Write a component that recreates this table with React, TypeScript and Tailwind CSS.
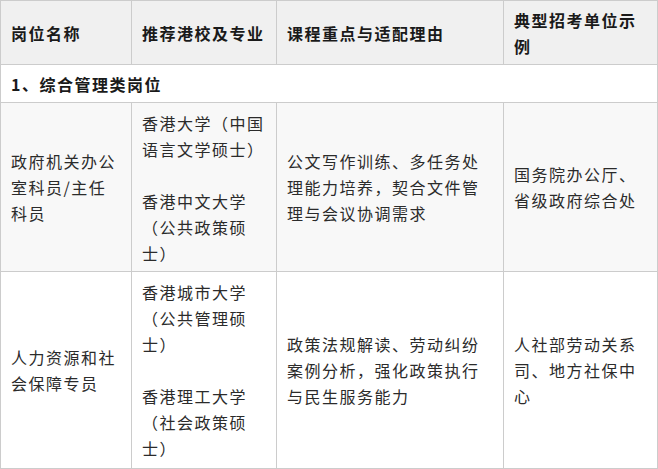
const font = { fontFamily: '"Noto Sans CJK SC", "Noto Sans", sans-serif' };

type Row = {
  title: string;
  schools: string[];
  reason: string;
  units: string;
  rowClass: string;
};

const rows: Row[] = [
  {
    title: "政府机关办公室科员/主任科员",
    schools: ["香港大学（中国语言文学硕士）", "香港中文大学（公共政策硕士）"],
    reason: "公文写作训练、多任务处理能力培养，契合文件管理与会议协调需求",
    units: "国务院办公厅、省级政府综合处",
    rowClass: "bg-[#f8f8f8] h-[168px]",
  },
  {
    title: "人力资源和社会保障专员",
    schools: ["香港城市大学（公共管理硕士）", "香港理工大学（社会政策硕士）"],
    reason: "政策法规解读、劳动纠纷案例分析，强化政策执行与民生服务能力",
    units: "人社部劳动关系司、地方社保中心",
    rowClass: "bg-white h-[197px]",
  },
];

const cell = "border border-[#cccccc] px-[10px] py-[5px] align-middle";

export default function App() {
  return (
    <div className="bg-white w-[658px] h-[469px] overflow-hidden" style={font}>
      <table className="w-[657px] border-collapse table-fixed text-[16px] leading-[26px] tracking-[1.5px] text-[#2b2b2b]">
        <colgroup>
          <col className="w-[131px]" />
          <col className="w-[145px]" />
          <col className="w-[227px]" />
          <col className="w-[154px]" />
        </colgroup>
        <thead>
          <tr className="bg-[#f0f0f0] h-[64px]">
            <th className={`${cell} text-left font-bold text-[#1a1a1a]`}>岗位名称</th>
            <th className={`${cell} text-left font-bold text-[#1a1a1a]`}>推荐港校及专业</th>
            <th className={`${cell} text-left font-bold text-[#1a1a1a]`}>课程重点与适配理由</th>
            <th className={`${cell} text-left font-bold text-[#1a1a1a]`}>典型招考单位示例</th>
          </tr>
        </thead>
        <tbody>
          <tr className="bg-white h-[38px]">
            <td colSpan={4} className={`${cell} font-bold text-[#1a1a1a]`}>
              1、综合管理类岗位
            </td>
          </tr>
          {rows.map((r) => (
            <tr key={r.title} className={r.rowClass}>
              <td className={cell}>{r.title}</td>
              <td className={`${cell} align-top pt-[7px]`}>
                <div className="flex flex-col gap-[26px]">
                  {r.schools.map((s) => (
                    <div key={s}>{s}</div>
                  ))}
                </div>
              </td>
              <td className={cell}>{r.reason}</td>
              <td className={cell}>{r.units}</td>
            </tr>
          ))}
        </tbody>
      </table>
    </div>
  );
}
